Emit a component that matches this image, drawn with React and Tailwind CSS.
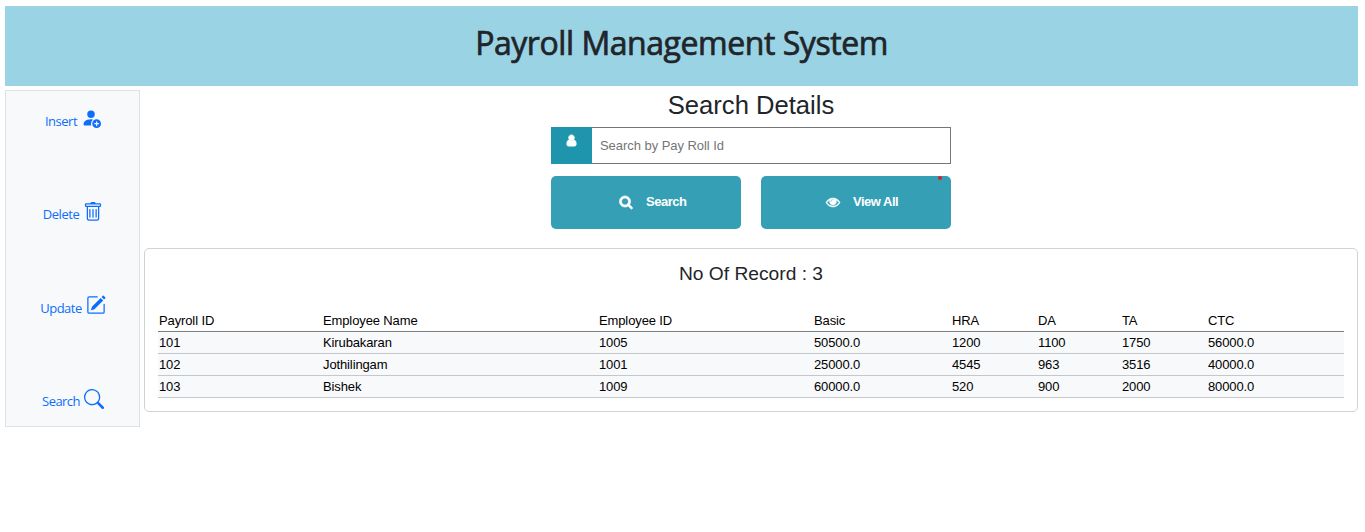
import { BsPersonFillAdd, BsTrash, BsPencilSquare, BsSearch } from "react-icons/bs";

const links = [
  { label: "Insert", Icon: BsPersonFillAdd, gap: "gap-[5px]", box: "h-[93px] pl-px", spacing: "tracking-[-0.5px]", icon: "-ml-px h-5 w-5" },
  { label: "Delete", Icon: BsTrash, gap: "gap-[4px]", box: "h-[94px] pl-px", spacing: "tracking-[-0.45px]", icon: "mt-px h-5 w-5" },
  { label: "Update", Icon: BsPencilSquare, gap: "gap-[4px]", box: "h-[93px] pl-px", spacing: "tracking-[-0.5px]", icon: "h-5 w-5" },
  { label: "Search", Icon: BsSearch, gap: "gap-[4px]", box: "h-[36px] pl-px", spacing: "tracking-[-0.55px]", icon: "mt-px h-5 w-5" },
];

const headers = ["Payroll ID", "Employee Name", "Employee ID", "Basic", "HRA", "DA", "TA", "CTC"];
const rows = [
  ["101", "Kirubakaran", "1005", "50500.0", "1200", "1100", "1750", "56000.0"],
  ["102", "Jothilingam", "1001", "25000.0", "4545", "963", "3516", "40000.0"],
  ["103", "Bishek", "1009", "60000.0", "520", "900", "2000", "80000.0"],
];

function Glyph({ d, className, stroke = 0 }) {
  return (
    <svg viewBox="0 0 1792 1792" className={className} fill="currentColor" stroke="currentColor" strokeWidth={stroke} overflow="visible" aria-hidden="true">
      <path d={d} />
    </svg>
  );
}

const USER =
  "M1536 1399q0 109-62.5 187t-150.5 78h-854q-88 0-150.5-78t-62.5-187q0-85 8.5-160.5t31.5-152 58.5-131 94-89 134.5-34.5q131 128 313 128t313-128q76 0 134.5 34.5t94 89 58.5 131 31.5 152 8.5 160.5zm-256-887q0 159-112.5 271.5t-271.5 112.5-271.5-112.5-112.5-271.5 112.5-271.5 271.5-112.5 271.5 112.5 112.5 271.5z";
const LENS =
  "M1216 832q0-185-131.5-316.5t-316.5-131.5-316.5 131.5-131.5 316.5 131.5 316.5 316.5 131.5 316.5-131.5 131.5-316.5zm512 832q0 52-38 90t-90 38q-54 0-90-38l-343-342q-179 124-399 124-143 0-273.5-55.5t-225-150-150-225-55.5-273.5 55.5-273.5 150-225 225-150 273.5-55.5 273.5 55.5 225 150 150 225 55.5 273.5q0 220-124 399l343 343q37 37 37 90z";
const EYE =
  "M1664 960q-152-236-381-353 61 104 61 225 0 185-131.5 316.5t-316.5 131.5-316.5-131.5-131.5-316.5q0-121 61-225-229 117-381 353 133 205 333.5 326.5t434.5 121.5 434.5-121.5 333.5-326.5zm-720-384q0-20-14-34t-34-14q-125 0-214.5 89.5t-89.5 214.5q0 20 14 34t34 14 34-14 14-34q0-86 61-147t147-61q20 0 34-14t14-34zm848 384q0 34-20 69-140 230-376.5 368.5t-499.5 138.5-499.5-139-376.5-368q-20-35-20-69t20-69q140-229 376.5-368t499.5-139 499.5 139 376.5 368q20 35 20 69z";

export default function App() {
  return (
    <div className="h-[532px] w-[1365px] overflow-hidden bg-white pl-[5px] pt-[6px] font-['Liberation_Sans',Arial,sans-serif] text-[13px] text-black">
      <header className="flex h-20 w-[1353px] justify-center bg-[#9ad3e3] pt-[16px]">
        <h1 className="whitespace-nowrap font-['Open_Sans','Noto_Sans',sans-serif] text-[32px] font-normal leading-[42px] tracking-[-0.45px] text-[#212529] [-webkit-text-stroke:0.7px_#212529]">
          Payroll Management System
        </h1>
      </header>

      <div className="mt-1 flex w-[1353px] items-start gap-1">
        <nav className="h-[337px] w-[135px] border border-[#dee2e6] bg-[#f8f9fb] pt-[17px] font-['Open_Sans','Noto_Sans',sans-serif] text-[#0d6efd]">
          {links.map(({ label, Icon, gap, box, spacing, icon }) => (
            <a key={label} className={`flex items-start justify-center ${gap} ${box}`}>
              <span className={`pt-[3px] text-[13px] leading-[20px] ${spacing}`}>{label}</span>
              <Icon className={icon} />
            </a>
          ))}
        </nav>

        <main className="w-[1214px]">
          <section className="mx-auto flex w-[400px] flex-col items-center">
            <h2 className="h-[37px] whitespace-nowrap text-[25.6px] leading-[30px] text-[#212529]">Search Details</h2>
            <div className="flex h-[37px] w-full">
              <span className="flex w-[41px] justify-center bg-[#1e95ac] pt-[7px] text-white">
                <Glyph d={USER} className="size-[13px]" stroke={120} />
              </span>
              <input
                placeholder="Search by Pay Roll Id"
                className="min-w-0 flex-1 border border-l-0 border-[#767676] pl-2 tracking-[-0.05px] placeholder:text-[#757575]"
              />
            </div>
            <div className="mt-3 flex w-full gap-5 text-[13px] font-bold tracking-[-0.5px] text-white">
              <button className="flex h-[53px] w-[190px] items-center gap-[13px] rounded-[5px] bg-[#35a0b5] pb-[2px] pl-[68px]">
                <Glyph d={LENS} className="size-[14px]" stroke={90} />
                Search
              </button>
              <button className="relative flex h-[53px] w-[190px] items-center gap-[13px] rounded-[5px] bg-[#35a0b5] pb-[2px] pl-[65px]">
                <Glyph d={EYE} className="size-[14px]" stroke={60} />
                View All
                <span className="absolute right-[9px] top-0 size-1 rounded-full bg-[#dc1f2e]" />
              </button>
            </div>
          </section>

          <section className="mt-[19px] h-[164px] rounded-[5px] border border-[#d1d2d3] px-[13px]">
            <h3 className="h-[61px] pt-[13px] text-center text-[19.2px] leading-[24px] text-[#212529]">No Of Record : 3</h3>
            <table className="w-full table-fixed border-collapse text-left tracking-[-0.12px]">
              <colgroup>
                <col className="w-[164px]" />
                <col className="w-[276px]" />
                <col className="w-[215px]" />
                <col className="w-[138px]" />
                <col className="w-[86px]" />
                <col className="w-[84px]" />
                <col className="w-[86px]" />
                <col className="w-[137px]" />
              </colgroup>
              <thead>
                <tr className="h-[21px] border-b border-[#7c7f82]">
                  {headers.map((h) => (
                    <th key={h} className="p-0 pl-px pt-px font-normal leading-[19px]">{h}</th>
                  ))}
                </tr>
              </thead>
              <tbody>
                {rows.map((row) => (
                  <tr key={row[0]} className="h-[22px] border-b border-[#c6c7ca] bg-[#f8f9fb]">
                    {row.map((cell, i) => (
                      <td key={i} className="p-0 pl-px leading-[21px]">{cell}</td>
                    ))}
                  </tr>
                ))}
              </tbody>
            </table>
          </section>
        </main>
      </div>
    </div>
  );
}
